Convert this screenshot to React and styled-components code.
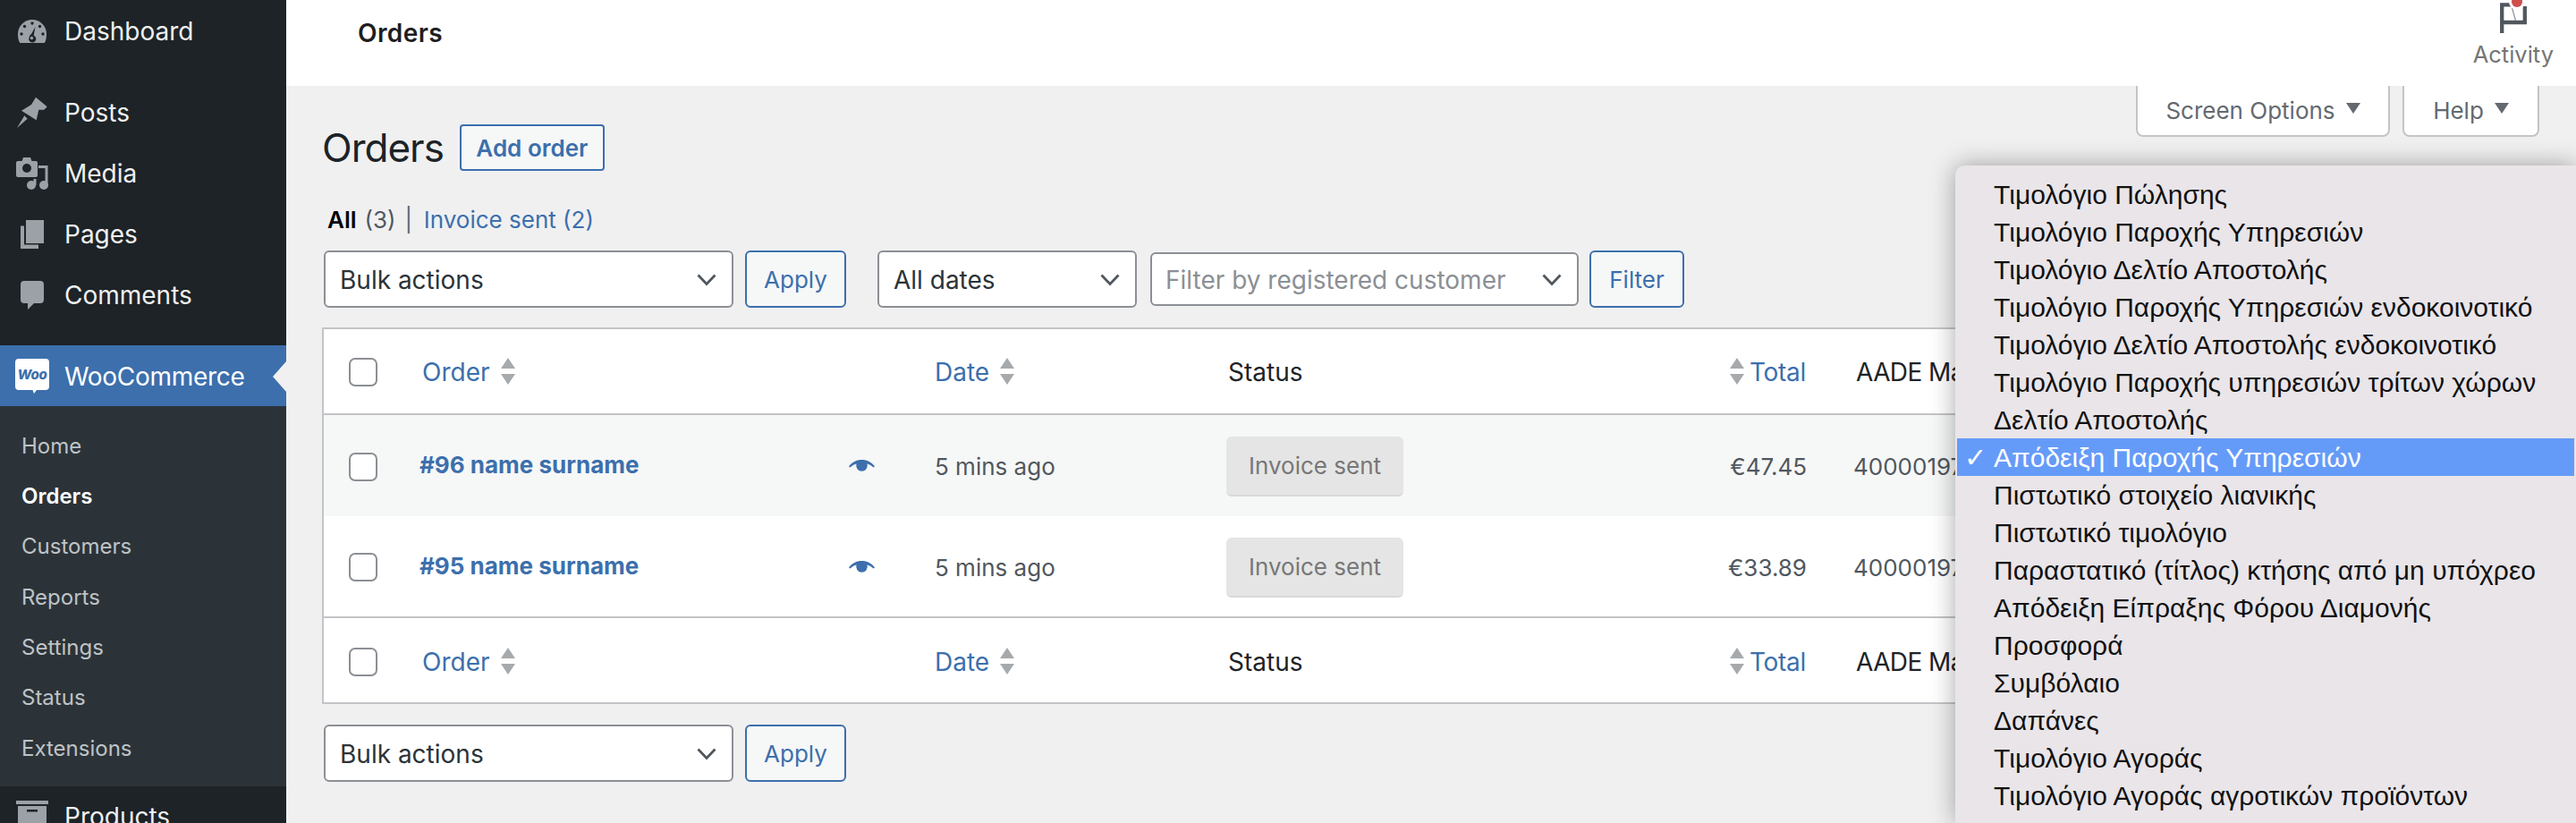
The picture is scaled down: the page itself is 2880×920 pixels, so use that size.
import styled, { createGlobalStyle } from "styled-components";

const subItems = ["Home", "Orders", "Customers", "Reports", "Settings", "Status", "Extensions"];

const docTypes = [
    "Τιμολόγιο Πώλησης",
    "Τιμολόγιο Παροχής Υπηρεσιών",
    "Τιμολόγιο Δελτίο Αποστολής",
    "Τιμολόγιο Παροχής Υπηρεσιών ενδοκοινοτικό",
    "Τιμολόγιο Δελτίο Αποστολής ενδοκοινοτικό",
    "Τιμολόγιο Παροχής υπηρεσιών τρίτων χώρων",
    "Δελτίο Αποστολής",
    "Απόδειξη Παροχής Υπηρεσιών",
    "Πιστωτικό στοιχείο λιανικής",
    "Πιστωτικό τιμολόγιο",
    "Παραστατικό (τίτλος) κτήσης από μη υπόχρεο",
    "Απόδειξη Είπραξης Φόρου Διαμονής",
    "Προσφορά",
    "Συμβόλαιο",
    "Δαπάνες",
    "Τιμολόγιο Αγοράς",
    "Τιμολόγιο Αγοράς αγροτικών προϊόντων",
];

const orders = [
    { name: "#96 name surname", total: "€47.45", mark: "400001977312", shaded: true },
    { name: "#95 name surname", total: "€33.89", mark: "400001977298", shaded: false },
];

function DashboardIcon() {
    return (
        <svg width="32" height="26" viewBox="0 0 32 26">
            <path fill="#9ca1a7" d="M2.2 26C.8 23.600 0 20.900 0 16 0 7.200 7.200 0 16 0s16 7.200 16 16c0 4.900-.8 7.600-2.200 10z" />
            <g fill="#1d2327">
                <circle cx="16" cy="4" r="1.700" />
                <circle cx="7.500" cy="7.500" r="1.700" />
                <circle cx="24.500" cy="7.500" r="1.700" />
                <circle cx="4" cy="16" r="1.700" />
                <circle cx="28" cy="16" r="1.700" />
                <path d="M19.500 8 17.700 17.800A4 4 0 1 1 12.800 19.500 4 4 0 0 1 15 16z" />
            </g>
            <circle cx="15.500" cy="20.500" r="1.700" fill="#9ca1a7" />
        </svg>
    );
}

function PinIcon() {
    return (
        <svg width="34" height="36" viewBox="0 0 34 36">
            <path fill="#9ca1a7" d="M21 .7 33.700 11.300 30.300 14.700 24.300 14.700 21.700 26.300 5 15.700 16 9zM8.300 21.300 11.700 24.700 0 35z" />
        </svg>
    );
}

function MediaIcon() {
    return (
        <svg width="36" height="36" viewBox="0 0 36 36">
            <path fill="#9ca1a7" d="M2 4h4.500L8 0h8l1.500 4H22a2 2 0 0 1 2 2v14a2 2 0 0 1-2 2H2a2 2 0 0 1-2-2V6a2 2 0 0 1 2-2z" />
            <circle cx="12" cy="12" r="5" fill="#1d2327" />
            <path fill="#9ca1a7" d="M25 9h10.500v22h-3V12H25zM19.500 24h3v7h-3z" />
            <circle cx="17" cy="31" r="5" fill="#9ca1a7" />
            <circle cx="31" cy="31" r="5" fill="#9ca1a7" />
        </svg>
    );
}

function PagesIcon() {
    return (
        <svg width="26" height="32" viewBox="0 0 26 32">
            <path fill="#9ca1a7" d="M6 0h20v26H6zM0 6.500h4V27.500h16V32H0z" />
        </svg>
    );
}

function CommentsIcon() {
    return (
        <svg width="26" height="32" viewBox="0 0 26 32">
            <path fill="#9ca1a7" d="M4 0h18a4 4 0 0 1 4 4v17a4 4 0 0 1-4 4h-7l-7 7v-7H4a4 4 0 0 1-4-4V4a4 4 0 0 1 4-4z" />
        </svg>
    );
}

function WooIcon() {
    return (
        <svg width="38" height="40" viewBox="0 0 38 40">
            <path fill="#fff" d="M4 0h30a4 4 0 0 1 4 4v27a4 4 0 0 1-4 4H24l-3 4-1.500-4H4a4 4 0 0 1-4-4V4a4 4 0 0 1 4-4z" />
            <text x="19" y="23" textAnchor="middle" fontFamily="Inter, sans-serif" fontSize="15" fontWeight="800" fontStyle="italic" fill="#3c6fac">Woo</text>
        </svg>
    );
}

function ProductsIcon() {
    return (
        <svg width="36" height="36" viewBox="0 0 36 36">
            <path fill="#9ca1a7" d="M0 0h36v4H0zM2 6h32v30H2z" />
            <rect x="12" y="10" width="12" height="2.500" fill="#1d2327" />
        </svg>
    );
}

function ActivityIcon() {
    return (
        <svg width="30" height="38" viewBox="0 0 30 38">
            <path fill="none" stroke="#50575e" strokeWidth="4.300" d="M2.200 37V5.300H13M2.200 25H27.800V7" />
            <path fill="none" stroke="#8b9096" strokeWidth="1.200" d="M13 7 17.500 23" />
            <circle cx="19" cy="2" r="9" fill="#fff" />
            <circle cx="19" cy="2" r="6" fill="#cf4f4c" />
        </svg>
    );
}

function EyeIcon() {
    return (
        <svg width="29" height="13" viewBox="0 0 29 13">
            <path fill="#3c6fac" d="M0 7.500C3.500 2.500 8.500 0 14.500 0S25.500 2.500 29 7.500L27.500 8.500C25 6.200 22.500 5 20.500 4.500A6.300 6.300 0 1 1 8.500 4.500C6.500 5 4 6.200 1.500 8.500z" />
        </svg>
    );
}

function SortArrows() {
    return (
        <SortIcon width="16" height="30" viewBox="0 0 16 30">
            <path fill="#a7aaad" d="M8 0 16 12H0zM0 18h16L8 30z" />
        </SortIcon>
    );
}

function Chevron() {
    return (
        <ChevronIcon width="22" height="14" viewBox="0 0 22 14">
            <path fill="none" stroke="#50575e" strokeWidth="2.800" d="M1.500 1.500 11 11.500 20.500 1.500" />
        </ChevronIcon>
    );
}

function TableHeading({ foot }) {
    return (
        <HeadRow $foot={foot}>
            <CheckCell><Checkbox /></CheckCell>
            <SortHead>Order <SortArrows /></SortHead>
            <span />
            <SortHead>Date <SortArrows /></SortHead>
            <PlainHead>Status</PlainHead>
            <TotalHead><SortArrows /> Total</TotalHead>
            <MarkHead>AADE Mark</MarkHead>
        </HeadRow>
    );
}

function App() {
    return (
        <Page>
            <GlobalStyle />
            <Sidebar>
                <MenuItem><IconSlot><DashboardIcon /></IconSlot>Dashboard</MenuItem>
                <MenuGap />
                <MenuItem><IconSlot><PinIcon /></IconSlot>Posts</MenuItem>
                <MenuItem><IconSlot><MediaIcon /></IconSlot>Media</MenuItem>
                <MenuItem><IconSlot><PagesIcon /></IconSlot>Pages</MenuItem>
                <MenuItem><IconSlot><CommentsIcon /></IconSlot>Comments</MenuItem>
                <MenuGap />
                <ActiveItem><IconSlot><WooIcon /></IconSlot>WooCommerce</ActiveItem>
                <SubMenu>
                    {subItems.map((item) => (
                        <SubItem key={item} $current={item === "Orders"}>{item}</SubItem>
                    ))}
                </SubMenu>
                <MenuItem><IconSlot><ProductsIcon /></IconSlot>Products</MenuItem>
            </Sidebar>

            <Main>
                <TopBar>
                    <TopTitle>Orders</TopTitle>
                    <ActivityButton>
                        <ActivityIcon />
                        <ActivityLabel>Activity</ActivityLabel>
                    </ActivityButton>
                </TopBar>

                <Content>
                    <ScreenTabs>
                        <ScreenTab $width="284px">Screen Options <TabCaret /></ScreenTab>
                        <ScreenTab $width="153px">Help <TabCaret /></ScreenTab>
                    </ScreenTabs>

                    <TitleRow>
                        <PageTitle>Orders</PageTitle>
                        <AddButton>Add order</AddButton>
                    </TitleRow>

                    <SubNav>
                        <strong>All</strong> <Muted>(3)</Muted>
                        <Separator>|</Separator>
                        <NavLink>Invoice sent (2)</NavLink>
                    </SubNav>

                    <Toolbar>
                        <SelectBox $width="458px">
                            Bulk actions
                            <Chevron />
                        </SelectBox>
                        <OutlineButton $width="113px">Apply</OutlineButton>
                        <FilterGroup>
                            <SelectBox $width="290px">
                                All dates
                                <Chevron />
                            </SelectBox>
                            <CustomerSelect>
                                Filter by registered customer
                                <Chevron />
                            </CustomerSelect>
                            <OutlineButton $width="106px">Filter</OutlineButton>
                        </FilterGroup>
                    </Toolbar>

                    <OrdersTable>
                        <TableHeading />
                        {orders.map((order) => (
                            <OrderRow key={order.name} $shaded={order.shaded}>
                                <CheckCell><Checkbox /></CheckCell>
                                <OrderLink>{order.name}</OrderLink>
                                <EyeCell><EyeIcon /></EyeCell>
                                <BodyText>5 mins ago</BodyText>
                                <span><StatusBadge>Invoice sent</StatusBadge></span>
                                <TotalText>{order.total}</TotalText>
                                <MarkText>{order.mark}</MarkText>
                            </OrderRow>
                        ))}
                        <TableHeading foot />
                    </OrdersTable>

                    <BottomBar>
                        <SelectBox $width="458px">
                            Bulk actions
                            <Chevron />
                        </SelectBox>
                        <OutlineButton $width="113px">Apply</OutlineButton>
                    </BottomBar>
                </Content>
            </Main>

            <TypeMenu>
                {docTypes.map((type) => (
                    <TypeOption key={type} $selected={type === "Απόδειξη Παροχής Υπηρεσιών"}>
                        {type === "Απόδειξη Παροχής Υπηρεσιών" && <CheckMark>✓</CheckMark>}
                        {type}
                    </TypeOption>
                ))}
            </TypeMenu>
        </Page>
    );
}

export default App;

const UI_FONT = `Inter, "Noto Sans", sans-serif`;
const GRID_COLUMNS = "110px 477px 96px 326px 529px 120px 1fr";

const GlobalStyle = createGlobalStyle`
  html, body {
    margin: 0;
    height: 920px;
    overflow: hidden;
    background: #f0f0f1;
    font-family: ${UI_FONT};
  }
  * {
    box-sizing: border-box;
  }
`;

const Page = styled.div`
  position: relative;
  display: flex;
  width: 2880px;
  height: 920px;
  overflow: hidden;
`;

const Sidebar = styled.nav`
  flex: 0 0 320px;
  display: flex;
  flex-direction: column;
  background: #1d2327;
  color: #f0f0f1;
  font-size: 28px;
`;

const MenuItem = styled.div`
  flex: 0 0 68px;
  display: flex;
  align-items: center;
  &:first-child {
    margin-top: 1px;
  }
`;

const MenuGap = styled.div`
  flex: 0 0 22.500px;
`;

const IconSlot = styled.span`
  flex: 0 0 72px;
  display: flex;
  justify-content: center;
`;

const ActiveItem = styled(MenuItem)`
  position: relative;
  padding-top: 2px;
  background: #3c6fac;
  color: #fff;
  letter-spacing: -0.300px;
  &::after {
    content: "";
    position: absolute;
    right: 0;
    top: 18px;
    border: 17px solid transparent;
    border-left-width: 0;
    border-right: 15px solid #f0f0f1;
  }
`;

const SubMenu = styled.div`
  flex: 0 0 425px;
  display: flex;
  flex-direction: column;
  padding: 16px 0 15px 24px;
  background: #2c3338;
`;

const SubItem = styled.div`
  flex: 0 0 56.330px;
  display: flex;
  align-items: center;
  font-size: 24px;
  font-weight: ${(p) => (p.$current ? 600 : 400)};
  color: ${(p) => (p.$current ? "#fff" : "#bfc3c6")};
`;

const Main = styled.main`
  flex: 1;
  min-width: 0;
  display: flex;
  flex-direction: column;
`;

const TopBar = styled.header`
  flex: 0 0 96px;
  display: flex;
  justify-content: space-between;
  background: #fff;
  padding: 0 25px 0 80px;
`;

const TopTitle = styled.h1`
  margin: 0;
  padding-top: 19px;
  font-size: 28px;
  line-height: 36px;
  font-weight: 600;
  letter-spacing: 0.4px;
  color: #1e1e1e;
`;

const ActivityButton = styled.div`
  display: flex;
  flex-direction: column;
  align-items: center;
`;

const ActivityLabel = styled.span`
  margin-top: 5px;
  font-size: 25.500px;
  line-height: 36px;
  color: #757575;
`;

const Content = styled.div`
  flex: 1;
  padding: 0 41px 0 40px;
`;

const ScreenTabs = styled.div`
  display: flex;
  justify-content: flex-end;
  gap: 14px;
  height: 57px;
  margin-bottom: -14px;
`;

const ScreenTab = styled.div`
  width: ${(p) => p.$width};
  display: flex;
  align-items: center;
  justify-content: center;
  gap: 12px;
  background: #fff;
  border: 2px solid #c3c4c7;
  border-top: none;
  border-radius: 0 0 8px 8px;
  font-size: 26px;
  color: #646970;
`;

const TabCaret = styled.span`
  border-left: 8px solid transparent;
  border-right: 8px solid transparent;
  border-top: 12px solid #646970;
  margin-top: -6px;
`;

const TitleRow = styled.div`
  display: flex;
  align-items: center;
  gap: 18px;
  height: 52px;
`;

const PageTitle = styled.h2`
  margin: 0;
  font-size: 44px;
  font-weight: 400;
  letter-spacing: -1px;
  color: #1d2327;
`;

const AddButton = styled.div`
  width: 162px;
  height: 52px;
  display: flex;
  align-items: center;
  justify-content: center;
  background: #f6f7f7;
  border: 2px solid #3c6fac;
  border-radius: 4px;
  font-size: 26px;
  font-weight: 600;
  color: #3c6fac;
`;

const SubNav = styled.div`
  display: flex;
  align-items: center;
  gap: 9px;
  height: 30px;
  margin: 39px 0 20px 6px;
  font-size: 26px;
  color: #000;
  strong {
    font-weight: 600;
  }
`;

const Muted = styled.span`
  color: #50575e;
`;

const Separator = styled.span`
  color: #646970;
  margin: 0 3.500px 0 1px;
`;

const NavLink = styled.span`
  color: #3c6fac;
`;

const Toolbar = styled.div`
  display: flex;
  align-items: center;
  gap: 13px;
  height: 64px;
  margin-left: 2px;
`;

const FilterGroup = styled.div`
  display: flex;
  align-items: center;
  gap: 15px;
  margin-left: 22px;
`;

const SelectBox = styled.div`
  width: ${(p) => p.$width};
  height: 64px;
  display: flex;
  align-items: center;
  justify-content: space-between;
  padding: 1px 17px 0 16px;
  background: #fff;
  border: 2px solid #8c8f94;
  border-radius: 6px;
  font-size: 28px;
  color: #2c3338;
`;

const CustomerSelect = styled(SelectBox)`
  width: 479px;
  height: 60px;
  padding-left: 15px;
  color: #8c8f94;
`;

const ChevronIcon = styled.svg`
  flex: none;
`;

const OutlineButton = styled.div`
  width: ${(p) => p.$width};
  height: 64px;
  display: flex;
  align-items: center;
  justify-content: center;
  background: #f6f7f7;
  border: 2px solid #3c6fac;
  border-radius: 6px;
  font-size: 26px;
  color: #3c6fac;
  ${FilterGroup} & {
    margin-left: -3px;
  }
`;

const OrdersTable = styled.section`
  margin-top: 22px;
  background: #fff;
  border: 2px solid #c3c4c7;
  font-size: 26px;
`;

const TableRow = styled.div`
  display: grid;
  grid-template-columns: ${GRID_COLUMNS};
  align-items: center;
`;

const HeadRow = styled(TableRow)`
  height: 96px;
  font-size: 28px;
  padding-top: ${(p) => (p.$foot ? "4px" : "2px")};
  border-top: ${(p) => (p.$foot ? "2px solid #c3c4c7" : "none")};
  border-bottom: ${(p) => (p.$foot ? "none" : "2px solid #c3c4c7")};
`;

const OrderRow = styled(TableRow)`
  height: 112.500px;
  padding-top: 3px;
  background: ${(p) => (p.$shaded ? "#f6f7f7" : "#fff")};
`;

const CheckCell = styled.div`
  padding-left: 28px;
  display: flex;
`;

const Checkbox = styled.span`
  width: 32px;
  height: 32px;
  background: #fff;
  border: 2px solid #8c8f94;
  border-radius: 7px;
`;

const SortHead = styled.div`
  display: flex;
  align-items: center;
  gap: 12px;
  color: #3c6fac;
`;

const SortIcon = styled.svg`
  flex: none;
  margin-top: -2px;
`;

const PlainHead = styled.div`
  padding-left: 2px;
  color: #1d2327;
`;

const TotalHead = styled(SortHead)`
  justify-content: flex-end;
  gap: 6px;
  margin-left: -40px;
  padding-right: 1px;
  letter-spacing: -0.300px;
`;

const MarkHead = styled.div`
  padding-left: 55px;
  color: #1d2327;
  white-space: nowrap;
  letter-spacing: -0.600px;
`;

const OrderLink = styled.div`
  margin-left: -3px;
  font-weight: 700;
  color: #3c6fac;
  margin-top: -4px;
`;

const EyeCell = styled.div`
  display: flex;
  margin-top: -2px;
`;

const BodyText = styled.div`
  color: #50575e;
`;

const StatusBadge = styled.span`
  display: inline-flex;
  align-items: center;
  justify-content: center;
  width: 198px;
  height: 67px;
  background: #e5e5e5;
  border-bottom: 2px solid #d8d8d8;
  border-radius: 6px;
  color: #777;
  font-size: 26px;
`;

const TotalText = styled.div`
  text-align: right;
  color: #50575e;
`;

const MarkText = styled.div`
  padding-left: 52px;
  color: #50575e;
`;

const BottomBar = styled(Toolbar)`
  margin-top: 23px;
`;

const TypeMenu = styled.div`
  position: absolute;
  top: 185px;
  left: 2186px;
  width: 694px;
  height: 735px;
  padding: 11px 2px 0;
  background: #e9e5e9;
  border-radius: 10px 0 0 0;
  box-shadow: 0 0 28px rgba(0, 0, 0, 0.35);
  font-family: "Liberation Sans", Arial, sans-serif;
  font-size: 30px;
  color: #111;
`;

const TypeOption = styled.div`
  position: relative;
  height: 42px;
  line-height: 44px;
  padding-left: 41px;
  white-space: nowrap;
  background: ${(p) => (p.$selected ? "#659bf8" : "transparent")};
  color: ${(p) => (p.$selected ? "#fff" : "inherit")};
`;

const CheckMark = styled.span`
  position: absolute;
  left: 8px;
  top: 0;
  font-family: "DejaVu Sans", sans-serif;
  font-size: 30px;
`;
